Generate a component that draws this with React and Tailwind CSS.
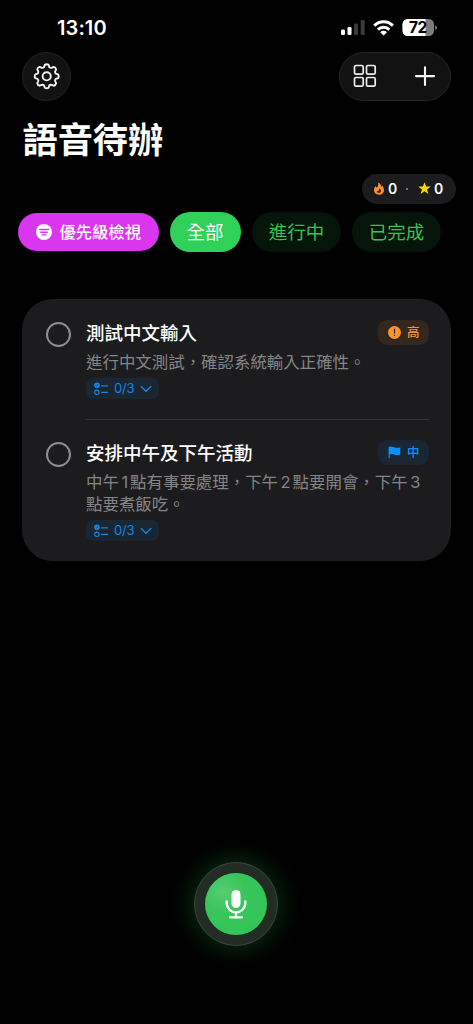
import React from "react";

const Gear = () => (
  <svg width="28" height="28" viewBox="-13.7 -13.3 28 28" fill="none" stroke="#f2f2f2" strokeWidth="1.9" strokeLinejoin="round" strokeLinecap="round">
    <path d="M-1.9-11.4Q0-12.6 1.9-11.4L2.6-9.2Q3.6-8.1 5-8.5L6.9-9.4Q9-9 9.4-6.9L8.5-5Q8.1-3.6 9.2-2.6L11.4-1.9Q12.6 0 11.4 1.9L9.2 2.6Q8.1 3.6 8.5 5L9.4 6.9Q9 9 6.9 9.4L5 8.5Q3.6 8.1 2.6 9.2L1.9 11.4Q0 12.6-1.9 11.4L-2.6 9.2Q-3.6 8.1-5 8.5L-6.9 9.4Q-9 9-9.4 6.9L-8.5 5Q-8.1 3.6-9.2 2.6L-11.4 1.9Q-12.6 0-11.4-1.9L-9.2-2.6Q-8.1-3.6-8.5-5L-9.4-6.9Q-9-9-6.9-9.4L-5-8.5Q-3.6-8.1-2.6-9.2Z" />
    <circle r="4.1" />
  </svg>
);

const StatusIcons = () => (
  <svg width="98" height="20" viewBox="340 18 98 20">
    <rect x="341" y="29.5" width="4" height="5.5" rx="1.2" fill="#fff" />
    <rect x="347.5" y="27" width="4" height="8" rx="1.2" fill="#fff" />
    <rect x="354" y="23.5" width="4" height="11.5" rx="1.2" fill="#3a3a3a" />
    <rect x="360.7" y="20" width="4" height="15" rx="1.2" fill="#3a3a3a" />
    <g fill="none" stroke="#fff" strokeWidth="2.9">
      <path d="M374.3 25.6A13.2 13.2 0 0 1 392.9 25.6" />
      <path d="M377.9 29.6A8.2 8.2 0 0 1 389.3 29.6" />
    </g>
    <path d="M380.2 32.2A4.8 4.8 0 0 1 387 32.2L383.6 35.4Z" fill="#fff" />
    <clipPath id="battery"><rect x="402.5" y="19" width="31.5" height="17" rx="5.2" /></clipPath>
    <g clipPath="url(#battery)">
      <rect x="402" y="19" width="33" height="17" fill="#7d7d7d" />
      <rect x="402" y="19" width="23.5" height="17" fill="#fff" />
    </g>
    <path d="M435.2 25.2Q437 26 437 27.6T435.2 30Z" fill="#7d7d7d" />
    <text x="418" y="33.3" textAnchor="middle" fontSize="15.5" fontWeight="700" fill="#000" fontFamily="Inter, sans-serif" letterSpacing="-0.4">72</text>
  </svg>
);

const Chip = ({ children }) => (
  <div className="flex h-10 w-[89px] items-center justify-center rounded-full bg-[#05150a] pt-px text-[18.5px] text-[#30c455]">{children}</div>
);

const Subtasks = () => (
  <div className="flex h-[21px] w-[73px] items-center rounded-[7px] bg-[#1a2631] pl-2 text-[#1187e6]">
    <svg width="14" height="14" viewBox="0 0 14 14" fill="none" stroke="currentColor">
      <circle cx="2.9" cy="3.3" r="2.8" fill="currentColor" stroke="none" />
      <path d="M1.7 3.5l.9 .8 1.5-2" stroke="#1a2631" strokeWidth=".6" />
      <circle cx="2.9" cy="10.3" r="2.2" strokeWidth="1.1" />
      <path d="M7.2 3.8H14M7.2 10.3H14" strokeWidth="1.2" />
    </svg>
    <span className="ml-[6px] w-[20px] text-[13px] leading-none tracking-[-0.2px]">0/3</span>
    <svg className="ml-[6px]" width="12" height="8" viewBox="0 0 12 8" fill="none" stroke="currentColor" strokeWidth="1.4" strokeLinecap="round" strokeLinejoin="round">
      <path d="M1.2 1.5l4.8 4.8 4.8-4.8" />
    </svg>
  </div>
);

const Num = ({ children }) => <span className="mr-[2px] ml-[2.5px]">{children}</span>;

const Task = ({ title, badge, children }) => (
  <div className="flex">
    <div className="mt-[2px] mr-[15px] size-[25px] shrink-0 rounded-full border-2 border-[#8e8e93]" />
    <div className="min-w-0 flex-1">
      <div className="flex h-[26px] items-start justify-between">
        <h2 className="text-[18.5px] leading-[26px] font-medium text-white">{title}</h2>
        {badge}
      </div>
      <p className="mt-[5px] text-[16.45px] leading-[22px] whitespace-nowrap text-[#858587]">{children}</p>
      <div className="mt-[5px]"><Subtasks /></div>
    </div>
  </div>
);

export default function App() {
  return (
    <div className="flex h-[1024px] w-[473px] flex-col overflow-hidden bg-black font-['Inter','Noto_Sans_CJK_TC',sans-serif] text-white">
      <div className="flex h-[52px] items-start justify-between pr-[35px] pl-[57px]">
        <span className="mt-[18px] text-[20px] leading-5 font-semibold tracking-[0.1px]">13:10</span>
        <div className="mt-[18px]"><StatusIcons /></div>
      </div>

      <div className="flex h-[49px] justify-between px-[22px]">
        <button className="flex size-[49px] items-center justify-center rounded-full border border-[#242424] bg-[#121212]"><Gear /></button>
        <div className="flex h-[49px] w-[112px] items-center justify-between rounded-full border border-[#242424] bg-[#121212] pr-[14px] pb-px pl-[13px]">
          <svg width="24" height="24" viewBox="0 0 24 24" fill="none" stroke="#eee" strokeWidth="1.7">
            <rect x="1.5" y="1.5" width="8.7" height="8.7" rx="1.5" />
            <rect x="13.5" y="1.5" width="8.7" height="8.7" rx="1.5" />
            <rect x="1.5" y="13.5" width="8.7" height="8.7" rx="1.5" />
            <rect x="13.5" y="13.5" width="8.7" height="8.7" rx="1.5" />
          </svg>
          <svg width="22" height="22" viewBox="0 0 22 22" stroke="#f5f5f5" strokeWidth="2.1" strokeLinecap="round">
            <path d="M11 2.2v17.8M2 11.1h18" />
          </svg>
        </div>
      </div>

      <h1 className="mt-[15px] ml-[22.5px] h-[48px] text-[35.2px] leading-[48px] font-bold">語音待辦</h1>

      <div className="mt-[9.5px] mr-[17px] flex h-[30px] w-[94px] items-center self-end rounded-full bg-[#1c1c1e] pb-px pl-[12px] text-[14px] font-semibold">
        <svg width="10" height="13" viewBox="0 0 10 13">
          <path d="M4 .5C6.3 1.4 7.2 3 7.2 5C7.8 4.6 8 4 8 3.4C9.4 4.8 10 6.4 10 8C10 11 7.9 12.8 5 12.8C2 12.8 0 11 0 8.1C0 6.4.6 5 1.7 3.9C1.9 5 2.3 5.4 2.9 5.6C4.3 4.3 4.7 2.3 4 .5Z" fill="#ff9230" />
          <path d="M5.2 6.2C6.9 7 7.3 8.2 7 9.3C6.7 10.5 5.7 11 4.8 10.9C3.4 10.8 2.7 9.7 3 8.4C3.4 9 3.8 9.1 4.2 9C5 8.2 5.3 7.2 5.2 6.2Z" fill="#35251a" />
        </svg>
        <span className="ml-[4px] w-[9px]">0</span>
        <span className="mt-px mr-[9.5px] ml-[9px] size-[2px] rounded-full bg-[#8e8e93]" />
        <svg width="13" height="13" viewBox="0 0 24 24" fill="#ffd60a">
          <path d="M12 .5l3 8h8.5l-6.8 5.2 2.5 8.5-7.2-5-7.2 5 2.5-8.5L.5 8.5H9z" />
        </svg>
        <span className="ml-[3.5px]">0</span>
      </div>

      <div className="mt-[8.5px] flex h-10 items-center pl-[18px]">
        <div className="mr-[11px] flex h-[38px] w-[141px] items-center rounded-full bg-[#da36f0] pl-[17.5px]">
          <svg width="16" height="16" viewBox="0 0 16 16">
            <circle cx="8" cy="8" r="8" fill="#fff" />
            <path d="M3.7 5.5h8.6M4.7 8.2h6.6M6 10.9h4" stroke="#da36f0" strokeWidth="1.4" strokeLinecap="round" />
          </svg>
          <span className="ml-[8px] text-[16.3px] font-medium">優先級檢視</span>
        </div>
        <div className="mr-[11px] flex h-10 w-[71px] items-center justify-center rounded-full bg-[#30d158] pt-px pr-px text-[18.5px]">全部</div>
        <div className="flex gap-[11px]">
          <Chip>進行中</Chip>
          <Chip>已完成</Chip>
        </div>
      </div>

      <main className="mx-[22px] mt-[47px] h-[262px] rounded-[31px] bg-[#1c1c1e] pt-[21px] pr-[22px] pl-[24px]">
        <Task
          title="測試中文輸入"
          badge={
            <span className="flex h-[25px] w-[51px] items-center rounded-[9px] bg-[#33271e] pl-[10px] text-[12.5px] font-medium text-[#ff9230]">
              <svg width="13" height="13" viewBox="0 0 13 13">
                <circle cx="6.5" cy="6.5" r="6.5" fill="#ff9230" />
                <path d="M6.5 3.2v3.8M6.5 9.2v.2" stroke="#33271e" strokeWidth="1.2" strokeLinecap="round" />
              </svg>
              <span className="mt-px ml-[6px]">高</span>
            </span>
          }
        >
          進行中文測試，確認系統輸入正確性。
        </Task>
        <div className="mt-[20px] mb-[20px] ml-[40px] h-px bg-[#343436]" />
        <Task
          title="安排中午及下午活動"
          badge={
            <span className="flex h-[25px] w-[51px] items-center rounded-[9px] bg-[#1a2631] pl-[10px] text-[12.5px] font-medium text-[#0a91ff]">
              <svg width="13" height="13" viewBox="0 0 13 13">
                <path d="M.6 1.2C2.5.1 4.2.4 6.2 1.2S10.2 2 12.3 1.3V8.7C10.2 9.5 8.2 9.3 6.2 8.6S3 8 1.8 8.7V12.3H.6Z" fill="#0a91ff" />
              </svg>
              <span className="mt-px ml-[6px]">中</span>
            </span>
          }
        >
          中午<Num>1</Num>點有事要處理，下午<Num>2</Num>點要開會，下午<Num>3</Num>
          <br />
          點要煮飯吃。
        </Task>
      </main>

      <div className="mt-auto mr-px mb-[78px] flex size-[84px] items-center justify-center self-center rounded-full border border-[#38443b] bg-[#222c25] shadow-[0_0_26px_2px_rgba(48,209,88,0.24)]">
        <button className="flex size-[62px] items-center justify-center rounded-full bg-[radial-gradient(circle_at_30%_30%,#58cd72_0%,#38c65b_35%,#30c254_100%)]">
          <svg width="22" height="30" viewBox="0 0 22 30" fill="none" stroke="#fff" strokeWidth="2.3" strokeLinecap="round">
            <rect x="6.5" y="1" width="9" height="18" rx="4.5" fill="#fff" stroke="none" />
            <path d="M1.7 12.5V14.2A9.3 9.3 0 0 0 20.3 14.2V12.5M11 23.8v4.5M5 28.3h12" />
          </svg>
        </button>
      </div>
    </div>
  );
}
